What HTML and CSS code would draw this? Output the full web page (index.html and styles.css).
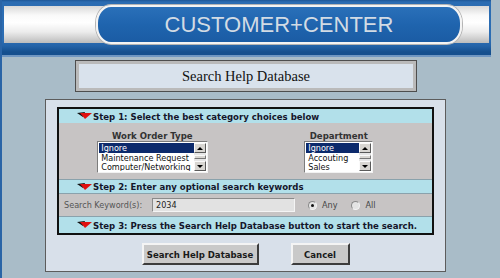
FILE: index.html
```html
<!DOCTYPE html>
<html lang="en">
<head>
 <meta charset="UTF-8">
 <title>Customer Center - Search Help Database</title>
 <link rel="stylesheet" href="styles.css">
</head>
<body>
 <div class="page">
  <div class="banner">
   <div class="bar">
    <div class="pill">CUSTOMER+CENTER</div>
   </div>
  </div>

  <div class="title-box">
   <div class="title-inner">Search Help Database</div>
  </div>

  <div class="panel">
   <div class="form-box">
    <div class="step step-1">
     <svg class="step-arrow" width="15" height="8" viewBox="0 0 15 8"><polygon points="0,1 8,0 6,5" fill="#111"/><polygon points="3,1 15,1 8,7" fill="#e01010"/></svg>
     <span>Step 1: Select the best category choices below</span>
    </div>
    <div class="choices">
     <div class="choice">
      <div class="choice-label">Work Order Type</div>
      <div class="listbox list-wide">
       <div class="list-items">
        <div class="list-item selected">Ignore</div>
        <div class="list-item">Maintenance Request</div>
        <div class="list-item">Computer/Networking</div>
       </div>
       <div class="scrollbar">
        <div class="sb-btn"><span class="tri-up"></span></div>
        <div class="sb-track"><div class="sb-thumb"></div></div>
        <div class="sb-btn"><span class="tri-down"></span></div>
       </div>
      </div>
     </div>
     <div class="choice">
      <div class="choice-label">Department</div>
      <div class="listbox list-narrow">
       <div class="list-items">
        <div class="list-item selected">Ignore</div>
        <div class="list-item">Accouting</div>
        <div class="list-item">Sales</div>
       </div>
       <div class="scrollbar">
        <div class="sb-btn"><span class="tri-up"></span></div>
        <div class="sb-track"><div class="sb-thumb"></div></div>
        <div class="sb-btn"><span class="tri-down"></span></div>
       </div>
      </div>
     </div>
    </div>
    <div class="step step-2">
     <svg class="step-arrow" width="15" height="8" viewBox="0 0 15 8"><polygon points="0,1 8,0 6,5" fill="#111"/><polygon points="3,1 15,1 8,7" fill="#e01010"/></svg>
     <span>Step 2: Enter any optional search keywords</span>
    </div>
    <div class="keyword-row">
     <span class="keyword-label">Search Keyword(s):</span>
     <div class="keyword-input">2034</div>
     <span class="radio checked"></span><span class="radio-label">Any</span>
     <span class="radio"></span><span class="radio-label">All</span>
    </div>
    <div class="step step-3">
     <svg class="step-arrow" width="15" height="8" viewBox="0 0 15 8"><polygon points="0,1 8,0 6,5" fill="#111"/><polygon points="3,1 15,1 8,7" fill="#e01010"/></svg>
     <span>Step 3: Press the Search Help Database button to start the search.</span>
    </div>
   </div>
   <div class="buttons">
    <button class="btn btn-search">Search Help Database</button>
    <button class="btn btn-cancel">Cancel</button>
   </div>
  </div>
 </div>
</body>
</html>
```

FILE: styles.css
```css
body {
 margin: 0;
 background-color: #a9bcc8;
 font-family: "DejaVu Sans Condensed", "DejaVu Sans", sans-serif;
 font-stretch: condensed;
}

.page {
 border-left: 2px solid #2a64a6;
 min-height: 278px;
 box-sizing: border-box;
}

/* banner */
.banner {
 width: 489px;
 height: 57px;
 box-sizing: border-box;
 padding: 6px 2px 0 2px;
 background: linear-gradient(#1d5696 0, #2b6cb2 2px, #2c6db3 40px, #2463a8 46px, #154f8e 52px);
 border-bottom: 2px solid #6f96c2;
}

.bar {
 display: flex;
 align-items: center;
 height: 37px;
 background: linear-gradient(#d9d9d9, #f9f9f9 25%, #ffffff 45%, #ececec 70%, #bcbcbc);
}

.pill {
 margin-left: 92px;
 width: 362px;
 height: 35px;
 border: 2px solid #f4f4f4;
 border-radius: 15px / 18px;
 box-shadow: 0 0 0 1px #b5b5b5;
 background: linear-gradient(#2a70b9, #1f64ae 50%, #1b5ca4);
 color: #d2dbe4;
 font-family: "Liberation Sans", Arial, sans-serif;
 font-stretch: normal;
 font-size: 22px;
 line-height: 35px;
 text-align: center;
}

/* title */
.title-box {
 margin: 3px 0 0 73px;
 width: 342px;
 height: 32px;
 box-sizing: border-box;
 border: 1px solid #4e4e4e;
 background-color: #bababa;
 padding: 3px;
}

.title-inner {
 height: 100%;
 background-color: #d9e2ec;
 font-family: "Liberation Serif", "Times New Roman", serif;
 font-stretch: normal;
 font-size: 14.5px;
 line-height: 24px;
 text-align: center;
 color: #111;
}

/* main panel */
.panel {
 margin: 7px 0 0 43px;
 width: 401px;
 height: 173px;
 box-sizing: border-box;
 border: 1px solid #5c5c5c;
 background-color: #d8e0ea;
 padding: 7px 11px 0 11px;
}

.form-box {
 border: 2px solid #111;
 height: 128px;
 box-sizing: border-box;
 display: flex;
 flex-direction: column;
}

.step {
 display: flex;
 align-items: center;
 padding-left: 18px;
 background-color: #b2e0ea;
 font-size: 9.5px;
 font-weight: bold;
 color: #15152a;
 white-space: nowrap;
}

.step-arrow {
 flex: none;
 margin-right: 1px;
}

.step-1 {
 height: 14px;
}

.step-2 {
 height: 13px;
}

.step-3 {
 height: 16px;
}

.choices {
 display: grid;
 grid-template-columns: 1fr 1fr;
 height: 57px;
 box-sizing: border-box;
 padding-top: 8px;
 background-color: #c7c4c4;
 border-bottom: 1px solid #8aa2ac;
}

.choice {
 display: flex;
 flex-direction: column;
 align-items: center;
}

.choice-label {
 font-size: 9.5px;
 font-weight: bold;
 color: #333;
 height: 10px;
 line-height: 10px;
}

.listbox {
 display: flex;
 height: 32px;
 box-sizing: border-box;
 border: 1px solid;
 border-color: #7c7c7c #f2f2f2 #f2f2f2 #7c7c7c;
 background-color: #fff;
 padding: 1px;
}

.list-wide {
 width: 111px;
 margin-left: 1px;
}

.list-narrow {
 width: 69px;
}

.list-items {
 flex: 1;
 overflow: hidden;
}

.list-item {
 height: 9.6px;
 line-height: 10px;
 padding-left: 2px;
 font-size: 9px;
 color: #111;
 white-space: nowrap;
}

.list-item.selected {
 background-color: #0c2a6c;
 color: #fff;
}

.scrollbar {
 display: flex;
 flex-direction: column;
 width: 12px;
 background-color: #e6e6e6;
}

.sb-btn {
 height: 10px;
 box-sizing: border-box;
 border: 1px solid;
 border-color: #fafafa #5a5a5a #5a5a5a #fafafa;
 background-color: #d8d6d2;
 display: flex;
 align-items: center;
 justify-content: center;
}

.sb-track {
 flex: 1;
 display: flex;
 align-items: center;
}

.sb-thumb {
 width: 100%;
 height: 4px;
 box-sizing: border-box;
 border: 1px solid;
 border-color: #fafafa #777 #777 #fafafa;
 background-color: #d8d6d2;
}

.tri-up {
 border-left: 3px solid transparent;
 border-right: 3px solid transparent;
 border-bottom: 3px solid #000;
}

.tri-down {
 border-left: 3px solid transparent;
 border-right: 3px solid transparent;
 border-top: 3px solid #000;
}

/* keyword row */
.keyword-row {
 display: flex;
 align-items: center;
 height: 24px;
 box-sizing: border-box;
 padding-left: 5px;
 background-color: #c7c4c4;
 border-top: 1px solid #8aa2ac;
 border-bottom: 1px solid #8aa2ac;
 font-size: 9px;
}

.keyword-label {
 color: #555;
 width: 88px;
}

.keyword-input {
 width: 143px;
 height: 14px;
 box-sizing: border-box;
 border: 1px solid;
 border-color: #8a8a8a #f4f4f4 #f4f4f4 #8a8a8a;
 background-color: #e2e2e2;
 padding-left: 3px;
 line-height: 12px;
 color: #222;
}

.radio {
 width: 9px;
 height: 9px;
 box-sizing: border-box;
 border-radius: 50%;
 border: 1px solid;
 border-color: #8a8a8a #f4f4f4 #f4f4f4 #8a8a8a;
 background-color: #e4e4e4;
 margin-left: 13px;
 display: flex;
 align-items: center;
 justify-content: center;
}

.radio + .radio-label + .radio {
 margin-left: 14px;
}

.radio.checked::after {
 content: "";
 width: 3px;
 height: 3px;
 border-radius: 50%;
 background-color: #111;
}

.radio-label {
 margin-left: 5px;
 color: #444;
}

/* buttons */
.buttons {
 display: flex;
 justify-content: center;
 gap: 32px;
 margin-top: 8px;
}

.btn {
 height: 22px;
 box-sizing: border-box;
 border: 2px solid;
 border-color: #f4f4f4 #3c3c3c #3c3c3c #f4f4f4;
 background-color: #c9c9c9;
 font-family: "DejaVu Sans Condensed", "DejaVu Sans", sans-serif;
 font-stretch: condensed;
 font-size: 9.5px;
 font-weight: bold;
 color: #1a1a1a;
 padding: 0;
}

.btn-search {
 width: 117px;
}

.btn-cancel {
 width: 59px;
}
```
